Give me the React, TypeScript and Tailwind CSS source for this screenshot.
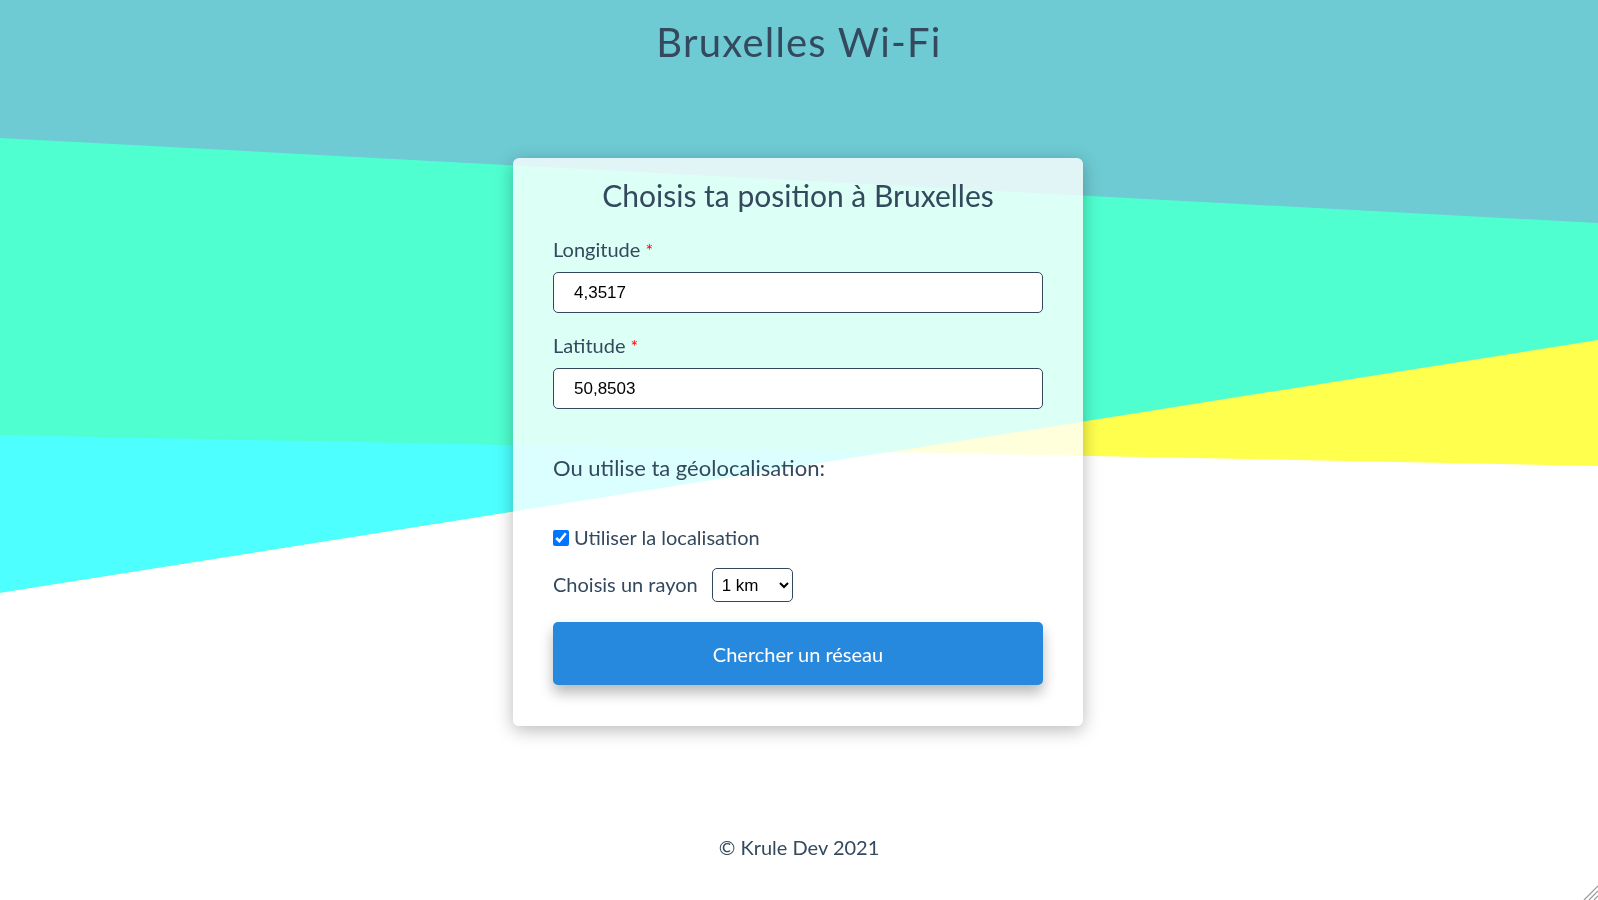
import React from 'react';

const Background: React.FC = () => (
  <svg
    className="fixed inset-0 -z-10 w-full h-full"
    viewBox="0 0 1598 900"
    preserveAspectRatio="none"
  >
    <rect x="0" y="0" width="1598" height="900" fill="#6ECBD3" />
    <polygon points="0,138 1598,223 1598,900 0,900" fill="#4FFFD0" />
    <polygon points="0,435 1598,466 1598,900 0,900" fill="#4DFFFF" />
    <polygon points="1598,340 0,593 0,900 1598,900" fill="#FFFF4D" />
    <polygon points="0,593 890,452 1598,466 1598,900 0,900" fill="#FFFFFF" />
  </svg>
);

const App: React.FC = () => {
  return (
    <div className="min-h-screen relative font-['Lato','Noto_Sans',sans-serif] text-[#34495e]">
      <Background />

      {/* Header */}
      <h1 className="pt-[18px] text-center text-[40px] leading-[48px] tracking-[1.2px] font-normal">
        Bruxelles Wi-Fi
      </h1>

      {/* Form card */}
      <main className="flex justify-center mt-[92px] pr-[2px]">
        <form className="w-[570px] bg-white/80 rounded-md shadow-[0_4px_18px_rgba(0,0,0,0.28)] px-10 pt-[19px] pb-[41px]">
          <h2 className="text-center text-[30px] leading-[36px] font-normal">
            Choisis ta position à Bruxelles
          </h2>

          <label className="block mt-[24px] h-[24px] text-[20px] leading-[24px]">
            Longitude <span className="text-[#ff0000] text-[18px] leading-none">*</span>
          </label>
          <input
            type="text"
            defaultValue="4,3517"
            className="block w-full mt-[11px] h-[41px] border border-[#34495e] rounded-[5px] bg-white pl-5 text-[17px] text-black font-['Liberation_Sans',Arial,sans-serif]"
          />

          <label className="block mt-[20px] h-[24px] text-[20px] leading-[24px]">
            Latitude <span className="text-[#ff0000] text-[18px] leading-none">*</span>
          </label>
          <input
            type="text"
            defaultValue="50,8503"
            className="block w-full mt-[11px] h-[41px] border border-[#34495e] rounded-[5px] bg-white pl-5 text-[17px] text-black font-['Liberation_Sans',Arial,sans-serif]"
          />

          <h3 className="mt-[45px] text-[22px] leading-[27px] font-normal">
            Ou utilise ta géolocalisation:
          </h3>

          <label className="flex items-center mt-[44px] text-[20px] leading-[24px]">
            <input type="checkbox" defaultChecked className="w-4 h-4 mr-[5px] mt-[2px]" />
            Utiliser la localisation
          </label>

          <div className="flex items-center mt-[19px]">
            <span className="text-[20px] leading-[24px] -mt-[3px]">Choisis un rayon</span>
            <select
              defaultValue="1"
              className="ml-[14px] w-[81px] h-[34px] border border-[#34495e] rounded-[5px] bg-white pl-[5px] text-[17px] text-black font-['Liberation_Sans',Arial,sans-serif]"
            >
              <option value="1">1 km</option>
              <option value="2">2 km</option>
              <option value="5">5 km</option>
            </select>
          </div>

          <button
            type="button"
            className="block w-full mt-[20px] h-[63px] rounded-[5px] bg-[#2789DD] text-white text-[20px] shadow-[0_8px_14px_rgba(0,0,0,0.28)]"
          >
            Chercher un réseau
          </button>
        </form>
      </main>

      {/* Footer */}
      <footer className="mt-[109px] text-center text-[20px] leading-[24px]">
        © Krule Dev 2021
      </footer>

      {/* resize grip */}
      <svg className="fixed right-0 bottom-0 w-[17px] h-[17px]" viewBox="0 0 17 17">
        <line x1="17" y1="3" x2="3" y2="17" stroke="#9a9a9a" strokeWidth="1.2" />
        <line x1="17" y1="8" x2="8" y2="17" stroke="#9a9a9a" strokeWidth="1.2" />
        <line x1="17" y1="13" x2="13" y2="17" stroke="#9a9a9a" strokeWidth="1.2" />
      </svg>
    </div>
  );
};

export default App;
